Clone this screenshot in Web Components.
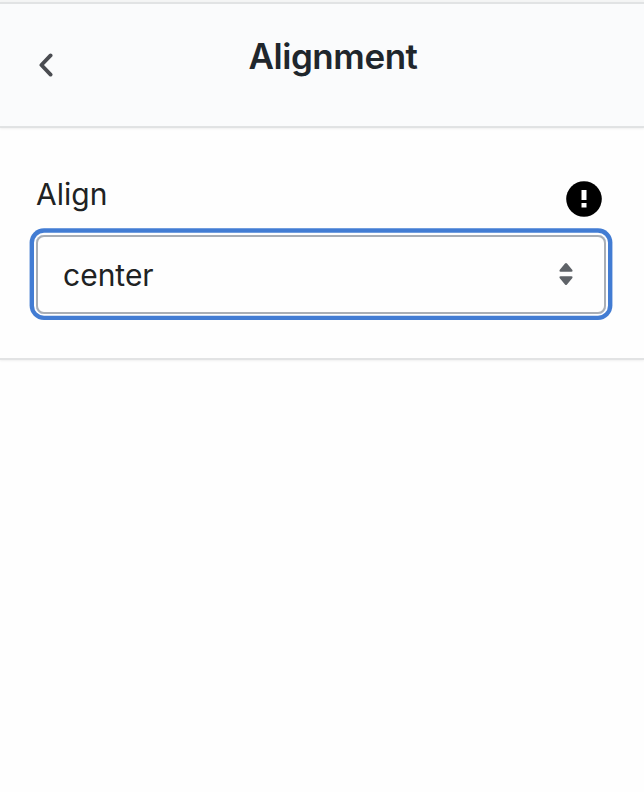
<!DOCTYPE html>
<html lang="en">
<head>
<meta charset="utf-8">
<title>Alignment</title>
<style>
  body {
    margin: 0;
    background: #fefefe;
    font-family: Inter, "Liberation Sans", sans-serif;
    color: #202223;
  }
</style>
</head>
<body>
<settings-panel>
  <panel-header slot="header">Alignment</panel-header>
  <setting-field>
    <span slot="label">Align</span>
    <select-box>center</select-box>
  </setting-field>
</settings-panel>

<script>
customElements.define('settings-panel', class extends HTMLElement {
  constructor() {
    super()
    const shadow = this.attachShadow({ mode: 'open' })
    shadow.innerHTML = `
    <slot name='header'></slot>
    <slot></slot>
    <style>
      :host{
        display:flex;
        flex-direction:column;
        min-height:100vh;
        box-sizing:border-box;
        border-top:2px solid #f4f5f5;
      }
    </style>`
  }
})

customElements.define('panel-header', class extends HTMLElement {
  constructor() {
    super()
    const shadow = this.attachShadow({ mode: 'open' })
    shadow.innerHTML = `
    <svg width='16' height='24' viewBox='0 0 16 24'>
      <path d='M12.6 2.4 3.4 12l9.2 9.6' fill='none' stroke='#4a4c51' stroke-width='3.8' stroke-linecap='round' stroke-linejoin='round'/>
    </svg>
    <h1><slot></slot></h1>
    <style>
      :host{
        display:grid;
        grid-template-columns:60px 1fr 49px;
        box-sizing:border-box;
        height:126px;
        padding:0 0 0 11px;
        border-top:2px solid #e1e3e4;
        border-bottom:2px solid #e1e3e4;
        background:#fafbfc;
        box-shadow:0 1px 2px rgba(0,0,0,.06);
      }
      svg{
        margin:49px 0 0 27px;
      }
      h1{
        margin:31px 0 0;
        font-size:35px;
        line-height:42px;
        font-weight:600;
        letter-spacing:-.45px;
        text-align:center;
        color:#1f262c;
      }
    </style>`
  }
})

customElements.define('setting-field', class extends HTMLElement {
  constructor() {
    super()
    const shadow = this.attachShadow({ mode: 'open' })
    shadow.innerHTML = `
    <div class='top'>
      <slot name='label'></slot>
      <svg width='36' height='36' viewBox='0 0 36 36'>
        <circle cx='18' cy='18' r='17.8' fill='#000'/>
        <path d='M15.5 9h5v10h-5zM15.5 22h5v4.6h-5z' fill='#fff'/>
      </svg>
    </div>
    <slot></slot>
    <style>
      :host{
        display:block;
        box-sizing:border-box;
        height:232px;
        padding:47px 38px 0 36px;
        border-bottom:2px solid #e2e3e4;
        box-shadow:0 1px 2px rgba(0,0,0,.06);
      }
      .top{
        display:flex;
        justify-content:space-between;
        height:60px;
        padding-right:4px;
        font-size:30px;
        line-height:38px;
      }
      svg{
        margin-top:6px;
      }
    </style>`
  }
})

customElements.define('select-box', class extends HTMLElement {
  constructor() {
    super()
    const shadow = this.attachShadow({ mode: 'open' })
    shadow.innerHTML = `
    <slot></slot>
    <svg width='16' height='24' viewBox='0 0 16 24'>
      <path d='M7 1.5Q8 .5 9 1.5L14.4 8Q15.2 9.8 13.5 9.8H2.5Q.8 9.8 1.6 8ZM7 22.5Q8 23.5 9 22.5L14.4 16Q15.2 14.2 13.5 14.2H2.5Q.8 14.2 1.6 16Z' fill='#5f6368'/>
    </svg>
    <style>
      :host{
        display:flex;
        align-items:center;
        justify-content:space-between;
        box-sizing:border-box;
        height:79px;
        padding:0 30px 0 25px;
        border:2px solid #a9aeb5;
        border-radius:8px;
        box-shadow:0 -.3px 0 2px #fefefe, 0 -.4px 0 6.4px #427cd3;
        font-size:30px;
      }
      svg{
        margin-bottom:2px;
      }
    </style>`
  }
})
</script>
</body>
</html>
